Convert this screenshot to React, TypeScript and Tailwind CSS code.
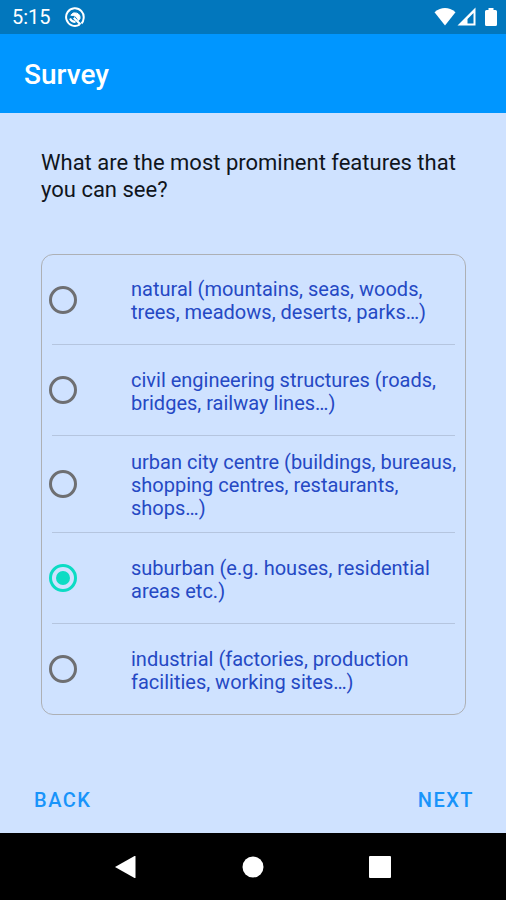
import { useState } from "react";

const options = [
  "natural (mountains, seas, woods, trees, meadows, deserts, parks…)",
  "civil engineering structures (roads, bridges, railway lines…)",
  "urban city centre (buildings, bureaus, shopping centres, restaurants, shops…)",
  "suburban (e.g. houses, residential areas etc.)",
  "industrial (factories, production facilities, working sites…)",
];

function StatusBar() {
  return (
    <div className="flex h-[34px] items-center justify-between bg-[#0277bd] pr-[9px] pl-3 text-white">
      <div className="flex items-center gap-3.5">
        <span className="text-[20px] leading-6">5:15</span>
        <svg className="size-5" viewBox="0 0 20 20" fill="none" stroke="currentColor" aria-hidden="true">
          <path d="M14.5 17.6A8.8 8.8 0 1 1 18.600 11.500Q18.400 14.500 16.500 16.500" strokeWidth="2" />
          <path d="M5.800 8.200A5 5 0 0 1 15 11.500L13.500 13.500Q11.500 8 5.800 8.200Z" fill="currentColor" strokeWidth="1" />
          <path d="M5 11.500Q6.500 14.800 10.500 15" strokeWidth="2" />
          <path d="M8.800 10.800L15.500 17.500" strokeWidth="2.2" />
        </svg>
      </div>
      <div className="flex items-center">
        <svg className="h-5 w-[22px]" viewBox="0 0 22 20" fill="currentColor" aria-hidden="true">
          <path d="M0.500 5.200Q11 -3 21.500 5.200L11 18.500Z" />
        </svg>
        <svg className="ml-px size-5" viewBox="0 0 20 20" fill="currentColor" aria-hidden="true">
          <path fillRule="evenodd" d="M0.500 18.500L18.500 0.500V18.500ZM10.500 16.500H16.500V6L10.500 12Z" />
        </svg>
        <svg className="ml-2 h-5 w-3" viewBox="0 0 12 20" fill="currentColor" aria-hidden="true">
          <path d="M3.500 1H8.500V3H10.500Q12 3 12 4.500V17.500Q12 19 10.500 19H1.500Q0 19 0 17.500V4.500Q0 3 1.500 3H3.500Z" />
        </svg>
      </div>
    </div>
  );
}

export default function App() {
  const [selected, setSelected] = useState(3);

  return (
    <div className="flex min-h-screen flex-col bg-[#cfe2ff] font-[Roboto,sans-serif]">
      <StatusBar />
      <header className="flex h-[79px] items-center bg-[#0096ff] px-6 pt-0.5">
        <h1 className="text-[28px] leading-8 font-medium text-white">Survey</h1>
      </header>

      <main className="flex grow flex-col">
        <fieldset className="mr-10 ml-[41px] mt-9">
          <legend className="text-[22px] leading-[27px] text-[#10151c]">
            What are the most prominent features that you can see?
          </legend>
          <div className="mt-[51px] rounded-xl border border-[#adb0b5] px-2.5">
            {options.map((label, i) => (
              <label
                key={label}
                className="flex min-h-[91px] items-center border-b border-[#b5c5df] py-3 first:min-h-[90px] last:min-h-[90px] last:border-b-0"
              >
                <input
                  type="radio"
                  name="features"
                  checked={selected === i}
                  onChange={() => setSelected(i)}
                  className="-ml-[3px] grid size-7 shrink-0 appearance-none place-content-center rounded-full border-[3px] border-[#6e6f72] before:size-3.5 before:rounded-full checked:border-[#0cdcc4] checked:before:bg-[#0cdcc4]"
                />
                <span className="mt-[3px] -mr-2 ml-[54px] text-[20px] leading-[23px] text-[#2549c4]">{label}</span>
              </label>
            ))}
          </div>
        </fieldset>

        <div className="mt-auto flex items-center justify-between pr-8 pl-[34px] pb-[21px] text-[20px] leading-6 font-medium text-[#1994fa]">
          <button type="button" className="tracking-[1.5px]">BACK</button>
          <button type="button" className="tracking-[1.5px]">NEXT</button>
        </div>
      </main>

      <nav className="flex h-[67px] items-center justify-center gap-[105px] bg-black text-white">
        <button type="button" aria-label="Back">
          <svg className="size-[22px]" viewBox="0 0 22 22" fill="currentColor">
            <path d="M0 11L19.500 0Q20.500 -0.500 20.500 0.500V21.500Q20.500 22.500 19.500 22Z" />
          </svg>
        </button>
        <button type="button" aria-label="Home">
          <svg className="size-[22px]" viewBox="0 0 22 22" fill="currentColor">
            <circle cx="11" cy="11" r="10.500" />
          </svg>
        </button>
        <button type="button" aria-label="Recent apps">
          <svg className="size-[22px]" viewBox="0 0 22 22" fill="currentColor">
            <rect x="0" y="0" width="22" height="22" rx="1" />
          </svg>
        </button>
      </nav>
    </div>
  );
}
